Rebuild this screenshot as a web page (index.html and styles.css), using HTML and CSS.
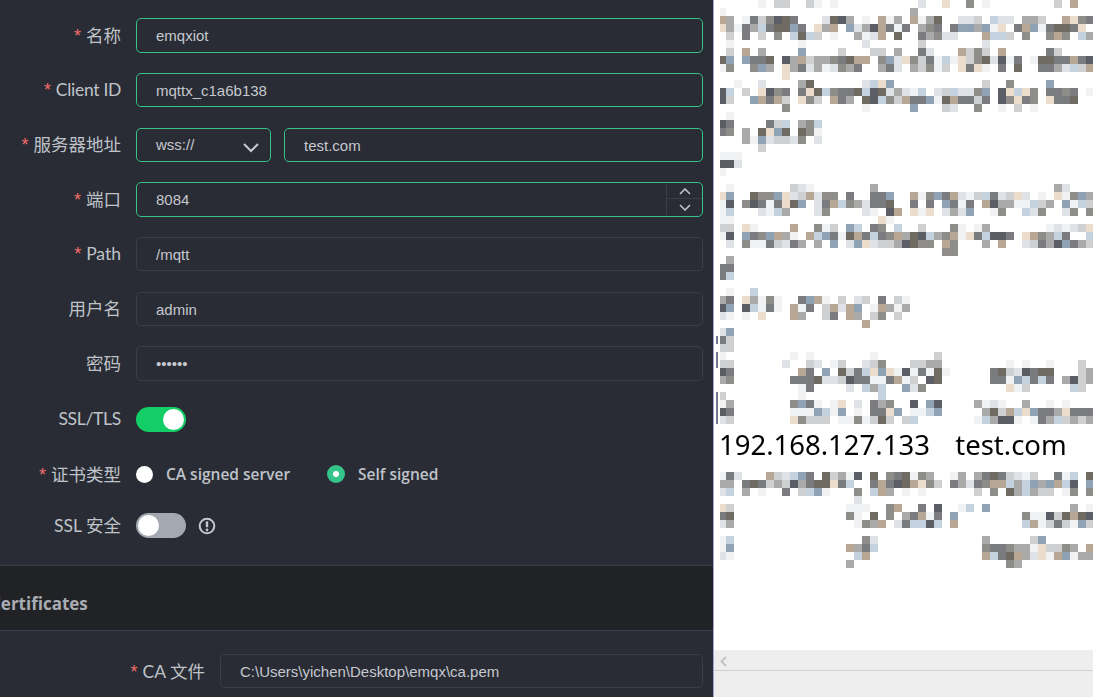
FILE: index.html
```html
<!DOCTYPE html>
<html lang="zh-CN">
<head>
    <meta charset="UTF-8">
    <title>MQTTX</title>
    <link rel="stylesheet" href="styles.css">
</head>
<body>
<div class="page">
    <div class="left">
        <div class="form">
            <div class="row">
                <label class="label"><i>*</i>名称</label>
                <div class="input active">emqxiot</div>
            </div>
            <div class="row">
                <label class="label tight"><i>*</i>Client ID</label>
                <div class="input active">mqttx_c1a6b138</div>
            </div>
            <div class="row">
                <label class="label"><i>*</i>服务器地址</label>
                <div class="input active select">
                    <span>wss://</span>
                    <svg width="18" height="11" viewBox="0 0 18 11"><path d="M2 2l7 7 7-7" fill="none" stroke="#c5c8ce" stroke-width="2"/></svg>
                </div>
                <div class="input active">test.com</div>
            </div>
            <div class="row">
                <label class="label"><i>*</i>端口</label>
                <div class="input active number">
                    <span>8084</span>
                    <div class="spin">
                        <div class="spin-btn"><svg width="12" height="7" viewBox="0 0 12 7"><path d="M1 6l5-5 5 5" fill="none" stroke="#c5c8ce" stroke-width="1.5"/></svg></div>
                        <div class="spin-btn"><svg width="12" height="7" viewBox="0 0 12 7"><path d="M1 1l5 5 5-5" fill="none" stroke="#c5c8ce" stroke-width="1.5"/></svg></div>
                    </div>
                </div>
            </div>
            <div class="row">
                <label class="label"><i>*</i>Path</label>
                <div class="input">/mqtt</div>
            </div>
            <div class="row">
                <label class="label">用户名</label>
                <div class="input">admin</div>
            </div>
            <div class="row">
                <label class="label">密码</label>
                <div class="input">••••••</div>
            </div>
            <div class="row row-ssl">
                <label class="label tight">SSL/TLS</label>
                <div class="switch on"><b></b></div>
            </div>
            <div class="row row-cert">
                <label class="label"><i>*</i>证书类型</label>
                <span class="radio"></span>
                <span class="radio-text">CA signed server</span>
                <span class="radio checked"></span>
                <span class="radio-text">Self signed</span>
            </div>
            <div class="row row-safe">
                <label class="label">SSL 安全</label>
                <div class="switch"><b></b></div>
                <svg class="warn" width="18" height="18" viewBox="0 0 18 18">
                    <circle cx="9" cy="9" r="7.3" fill="none" stroke="#c5c8ce" stroke-width="2"/>
                    <path d="M9 4.400v5.800" stroke="#c5c8ce" stroke-width="2.400"/>
                    <circle cx="9" cy="12.900" r="1.300" fill="#c5c8ce"/>
                </svg>
            </div>
        </div>
        <div class="section">
            <h3>Certificates</h3>
        </div>
        <div class="form form-cert">
            <div class="row">
                <label class="label label-wide"><i>*</i>CA 文件</label>
                <div class="input">C:\Users\yichen\Desktop\emqx\ca.pem</div>
            </div>
        </div>
    </div>
    <div class="right">
        <canvas id="mosaic" width="379" height="650"></canvas>
        <div class="hosts">192.168.127.133&nbsp;&nbsp;&nbsp;test.com</div>
        <div class="hscroll">
            <svg width="9" height="11" viewBox="0 0 9 11"><path d="M7 1L2.5 5.500 7 10" fill="none" stroke="#c4c4c4" stroke-width="2"/></svg>
        </div>
        <div class="status"></div>
    </div>
</div>
<script src="mosaic.js"></script>
</body>
</html>
```

FILE: styles.css
```css
*{
    margin: 0;
    padding: 0;
    box-sizing: border-box;
}
html,body{
    width: 100%;
    height: 100%;
    overflow: hidden;
}
.page{
    display: flex;
    width: 1093px;
    height: 697px;
}
.left{
    width: 714px;
    height: 697px;
    overflow: hidden;
    flex: none;
    background-color: #292c34;
    border-right: 1px solid #a5a4d6;
}
.form{
    padding: 8.2px 10px 13.6px 0;
}
.form-cert{
    padding-top: 13px;
}
.row{
    display: flex;
    align-items: center;
    height: 54.67px;
}
.row-ssl{
    height: 58.4px;
}
.row-cert{
    height: 50.6px;
}
.row-safe{
    height: 51.4px;
}
.label{
    width: 121px;
    margin-right: 15px;
    flex: none;
    text-align: right;
    font-family: "Lato", "Noto Sans CJK SC", sans-serif;
    font-size: 17.5px;
    color: #bfc3c9;
    position: relative;
    top: -1px;
}
.label-wide{
    width: 205px;
}
.tight{
    letter-spacing: -0.3px;
}
.label i{
    font-family: "Liberation Sans", sans-serif;
    font-style: normal;
    font-size: 18px;
    line-height: 0;
    color: #f56c6c;
    margin-right: 5px;
}
.input{
    flex: 1;
    height: 34.6px;
    line-height: 33.6px;
    padding-left: 19px;
    border: 1px solid #3b3e47;
    border-radius: 5px;
    font-family: "Liberation Sans", sans-serif;
    font-size: 15px;
    color: #c5c8ce;
}
.active{
    border-color: #34c388;
}
.select{
    flex: none;
    width: 135px;
    margin-right: 13px;
    display: flex;
    justify-content: space-between;
    align-items: center;
    padding-right: 10px;
}
.select svg{
    margin-top: 5px;
}
.number{
    display: flex;
    justify-content: space-between;
}
.spin{
    width: 36px;
    border-left: 1px solid #3b3e47;
    margin: 1px 0;
}
.spin-btn{
    height: 15.300px;
    display: flex;
    align-items: center;
    justify-content: center;
}
.spin-btn:first-child{
    border-bottom: 1px solid #3b3e47;
}
.switch{
    width: 50px;
    height: 25px;
    border-radius: 13px;
    background-color: #a3a8b1;
    padding: 2px;
    display: flex;
}
.switch b{
    width: 21px;
    height: 21px;
    border-radius: 50%;
    background-color: #fff;
}
.switch.on{
    background-color: #13ce66;
    justify-content: flex-end;
}
.radio{
    width: 17px;
    height: 17px;
    border-radius: 50%;
    background-color: #fff;
    flex: none;
}
.radio.checked{
    width: 18px;
    height: 18px;
    background-color: #34c388;
    display: flex;
    align-items: center;
    justify-content: center;
}
.radio.checked::after{
    content: "";
    width: 6px;
    height: 6px;
    border-radius: 50%;
    background-color: #fff;
}
.radio-text{
    margin-left: 13px;
    margin-right: 37px;
    font-family: "Open Sans", sans-serif;
    font-weight: 600;
    font-size: 15.5px;
    color: #bfc3c9;
}
.warn{
    margin: 1px 0 0 12px;
}
.section{
    height: 66px;
    padding-top: 12px;
    background-color: #212226;
    border-top: 1px solid #3b3e47;
    border-bottom: 1px solid #3b3e47;
    display: flex;
    align-items: center;
}
.section h3{
    margin-left: -10px;
    font-family: "Open Sans", sans-serif;
    font-size: 17px;
    font-weight: 700;
    color: #a9acb3;
}
.right{
    flex: 1;
    position: relative;
    background-color: #fff;
}
#mosaic{
    display: block;
}
.hosts{
    position: absolute;
    left: 5px;
    top: 426px;
    font-family: "Noto Sans", "Liberation Sans", sans-serif;
    font-size: 27.500px;
    line-height: 38px;
    word-spacing: 1.3px;
    color: #000;
    white-space: nowrap;
}
.hscroll{
    height: 21px;
    background-color: #eee;
    border-bottom: 1px solid #d0d0d0;
    padding: 3px 0 0 5px;
}
.status{
    height: 26px;
    background-color: #eee;
}
```

FILE: mosaic.js
```js
// pixelated text on the right, one string per 8px row, "." is white
var colors={
    a:'#5b5e64', b:'#7a7c80', c:'#8f8d8a', d:'#a9aaa9',
    e:'#b9a795', f:'#cfd0d2', g:'#8fa3b5', h:'#dfe3e7',
    i:'#f0f2f4', j:'#ecdccb', k:'#6f6a62', l:'#c4d2e0'
};
var rows=[
    [0,'.....i.ff. .fi.i..... .....h..j. .c.i...... ..f.e..'],
    [8,'i......... .......... ....d..... .......... .......'],
    [16,'ed.ibfcakb ...hkad.i. eid.eidk.. hhf.lhh.dd f..ejcb'],
    [24,'jdibdlbkkg b.jde.ghda ebib.dcb.b ggdgij.beg ibkkbj.'],
    [32,'.f.b.f.c.l klf.i..dih e.k..bdchh ...ellf.c. .cec.ld'],
    [40,'.i........ i.......h. .....f.... ...h...... .......'],
    [48,'.f.e.d.... g....f...f f.d..bh... efcf.e.... .bf....'],
    [56,'kg.gbbk.ad efddcbkee. cghjcfbili jfckhaib.i kkbbeba'],
    [64,'ic..cgd.jd bhdihcdb.. dbh.dfcif. jbji.b.k.. bbdhlfe'],
    [72,'........j. .......... .......... .......... .......'],
    [80,'..i..h.... dk......hl jg........ ...f..c... .g.....'],
    [88,'al.f.jacb. bjklcbbkla khdhil.hfl hhcg.ajljc .bbcb.i'],
    [96,'af..gebef. jcf.ebd.ka lcfebbgike bbfb.acjbc .jbbk..'],
    [104,'........c. ........i. ....g...fh ..c..i.f.i .......'],
    [112,'.i........ .......... .......... .......... .......'],
    [120,'ab....bfl. dcl....... .......... .......... .......'],
    [128,'bc.d.kjgk. kci....... .......... .......... .......'],
    [136,'...dighffh c.h....... .......... .......... .......'],
    [144,'.....f.... .......... .......... .......... .......'],
    [152,'iii....... .......... .......... .......... .......'],
    [160,'aah....... .......... .......... .......... .......'],
    [168,'i......... .......... .......... .......... .......'],
    [184,'.i.......f hi.......d .......... .......... ..dh...'],
    [192,'jg..kccgjh fehcc.b..b bg..eicgbe hiflbhfjh. i.jicgd'],
    [200,'ia.cabibjk g.hbelcdhb bk..b.b.gb ib.eaddiil fd.gilf'],
    [208,'il...hild. ..hc....hi .ae.jij.hd hg..ic..lh c..hc.c'],
    [216,'ii........ .......... ji........ .......... .......'],
    [224,'ff.ji....e ..cif.gl.b c.l..f...c i.id...... .ihihfj'],
    [232,'ia.gbcgedi .elgbikebl bcedkaldce ijblaab.je cdlb..l'],
    [240,'.h.ciibfhb d.d.g.hgjh ffdakcc.ec ...d.e..hf bdagbdf'],
    [248,'.......... .......... ........cc .......... .......'],
    [256,'.d........ .......... .......... .......... .......'],
    [264,'bb........ .......... .......... .......... .......'],
    [272,'bl........ .......... .......... .......... .......'],
    [288,'.i..l..... .......... .......... .......... .......'],
    [296,'db.jdici.. bgei.f.hf. b.fi...... .......... .......'],
    [304,'ag.alibi.e ib.feheg.i edid...... .......... .......'],
    [312,'hi.i.j...e d..fb.ed.f c.f....... .......... .......'],
    [320,'.......... ........e. .......... .......... .......'],
    [328,'hg........ .......... .......... .......... .......'],
    [336,'bf........ .......... .......... .......... .......'],
    [344,'ff........ .......... .......... .......... .......'],
    [352,'i........i .i.......i .......f.. .......... .......'],
    [360,'ff......h. .fh.if..hf c...ffdd.. ......i.i. .i...f.'],
    [368,'ab........ eb.g.kfblj gjiaibiki. ....bkfhab kk...fd'],
    [376,'dc.......b bbkhhfabbi ibeif.ak.. ....bbiglb lb.dafd'],
    [384,'.......... ib....h.ld l..ghc.... ......jif. ....lf.'],
    [392,'f......... i......... l......... .......... .......'],
    [400,'id.......c gbi.ij.h.b dc..a.ga.. ..dihi..d. .i.i...'],
    [408,'ab.......i iiglig.i.b bjg.iilg.. ...dkfeljg bbdjbbb'],
    [416,'hf.......j cfff.iicif kf.fl..... ..ildaai.i bdlfdfd'],
    [472,'ibh...efhl gb.kfdia.k .cbkicd..i d.dbkbfhif ..bil.k'],
    [480,'dd.bkbfdfa dbkkjbl..b ebakejcf.b dhbceeldlg dgela.g'],
    [488,'hl.d.i..b. flgi...c.l ed.i.i.... ..f.c.kdld ff.ic.c'],
    [496,'.......... .......h.. .......... .......... .......'],
    [504,'jf........ ......iii. .ce..b.a.. il.g...... ....d.i'],
    [512,'bk........ ......ci.k .c.dbeib.g ........ci iafkeka'],
    [520,'hd........ .......icd e.hbllal.e ........le ifbfigf'],
    [536,'il........ ........ch .......... ...d.....f g......'],
    [544,'ig........ ......edbl .......... ...cbbcddi jffcd.e'],
    [552,'hi........ .......le. .......... ...elbkedh jiegidd'],
    [560,'.......... ......d... .......... ......cd.. .......']
];
window.onload=function(){
    var ctx=document.getElementById('mosaic').getContext('2d');
    for(var i=0;i<rows.length;i++){
        var cells=rows[i][1].replace(/ /g,'');
        for(var k=0;k<cells.length&&k<47;k++){
            var color=colors[cells.charAt(k)];
            if(!color) continue;
            // first column is cut off by the pane edge
            var x=k==0?6:4+8*k;
            ctx.fillStyle=color;
            ctx.fillRect(x,rows[i][0],k==0?6:8,8);
        }
    }
    // thin dark sliver left of the first column
    ctx.fillStyle='#77778c';
    ctx.fillRect(2,336,2,8);
    ctx.fillRect(2,352,2,16);
    ctx.fillRect(2,392,2,32);
}
```
